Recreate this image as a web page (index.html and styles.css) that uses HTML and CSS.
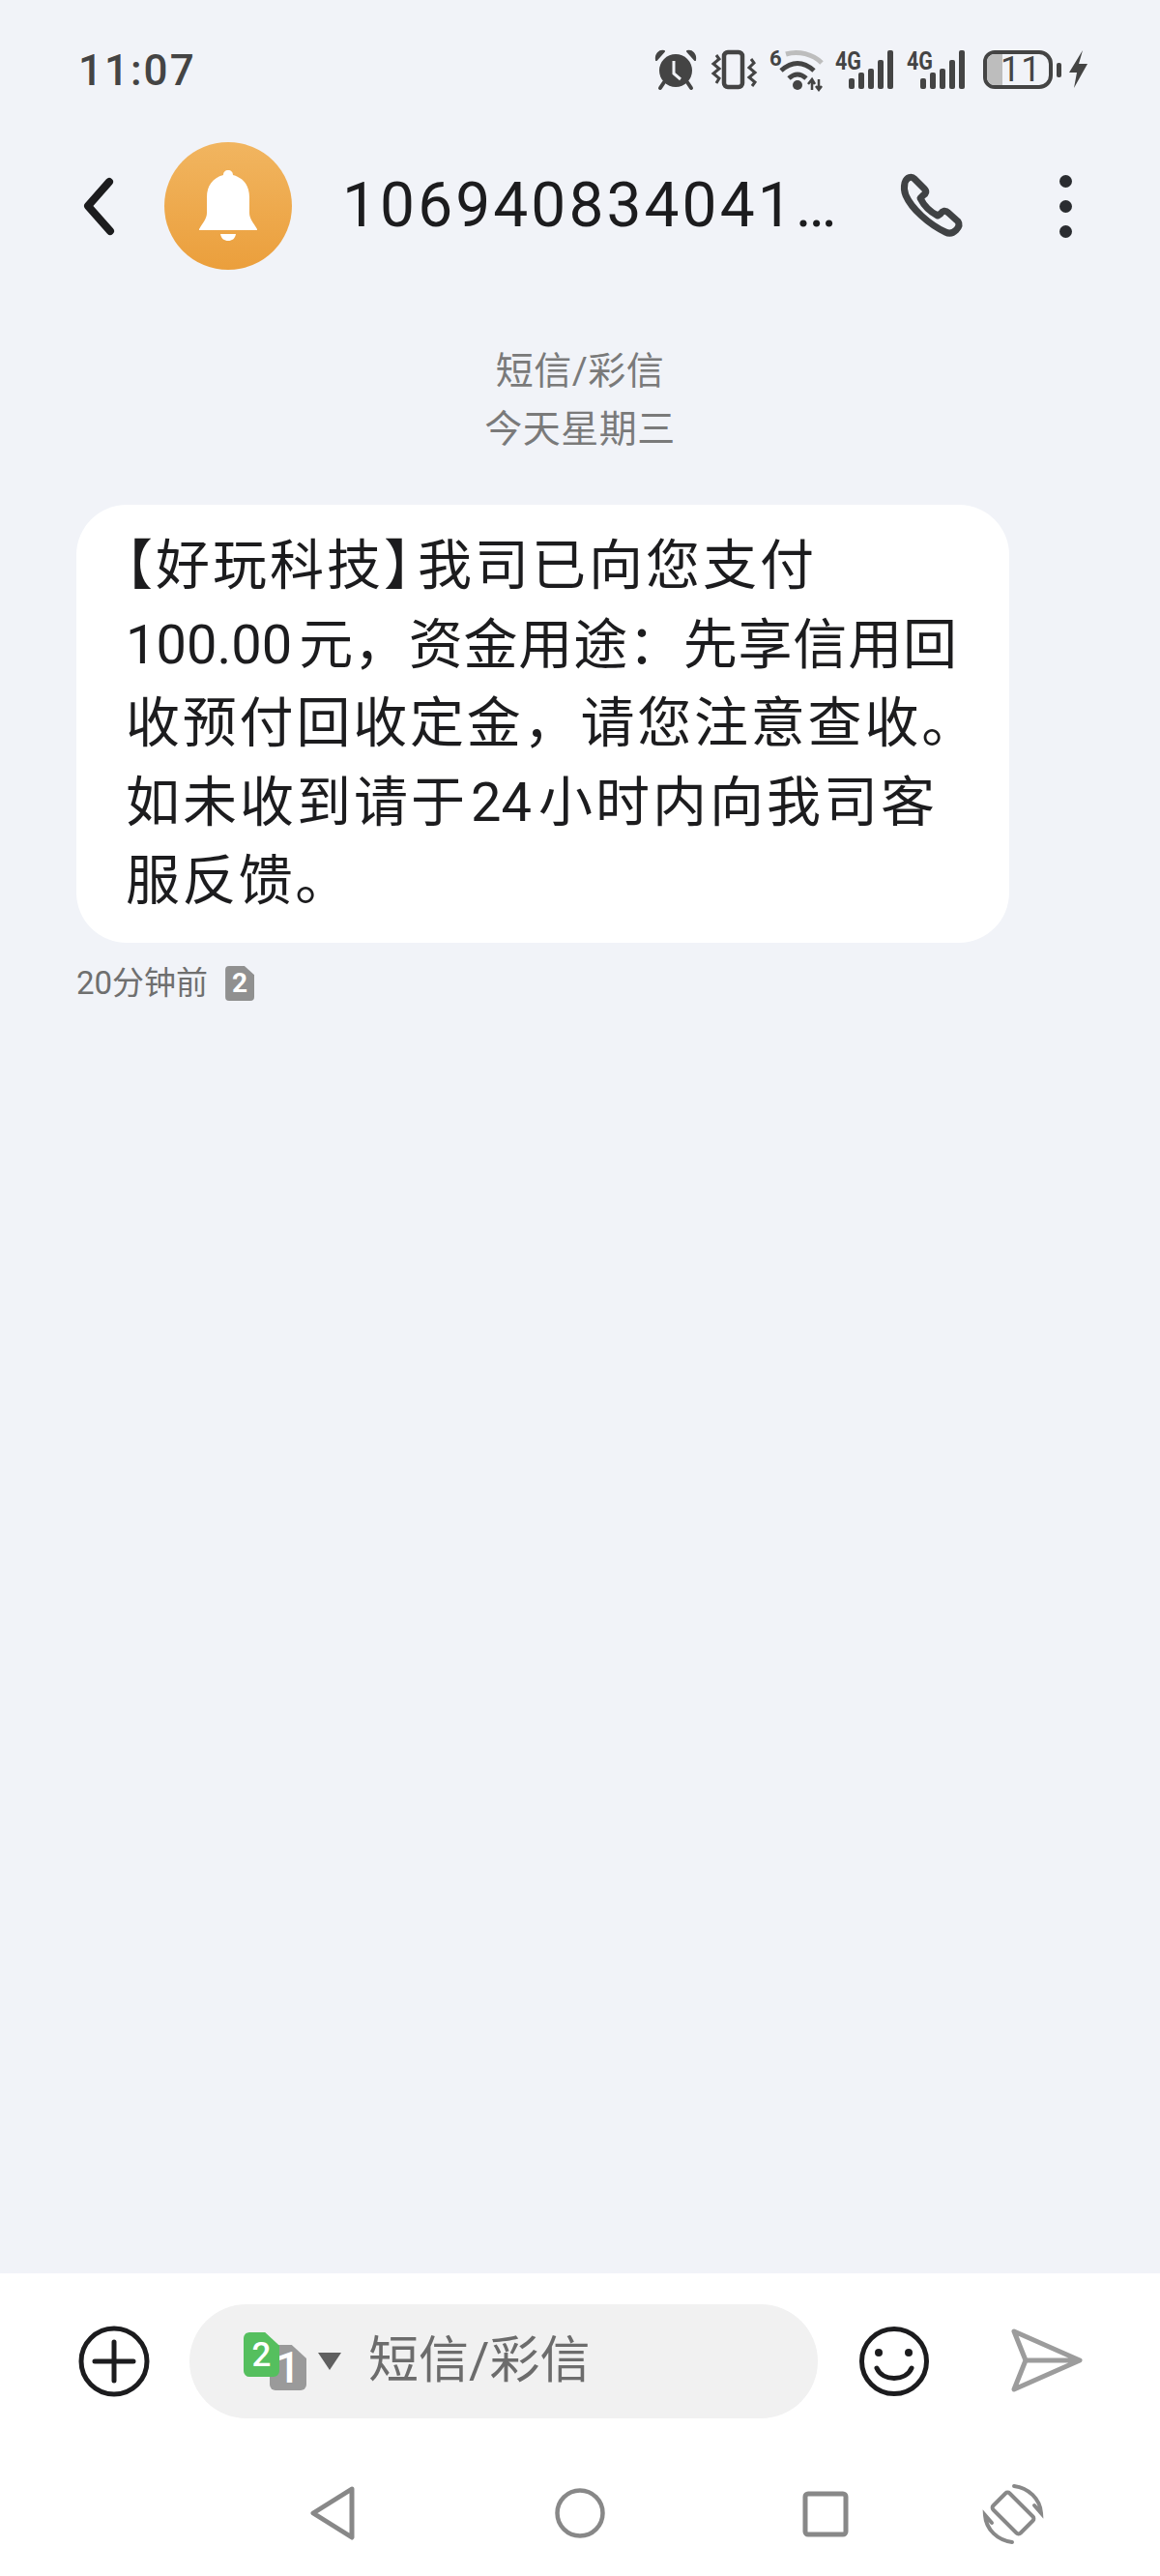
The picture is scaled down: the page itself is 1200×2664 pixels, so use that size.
FILE: index.html
```html
<!DOCTYPE html>
<html lang="zh-CN">
<head>
<meta charset="utf-8">
<title>短信</title>
<link rel="stylesheet" href="styles.css">
</head>
<body>
<div class="screen">
  <div class="status">
    <span class="clock">11:07</span>
    <div class="status-icons">
      <svg class="si-alarm" width="42" height="42" viewBox="0 0 42 42"><g fill="#444"><circle cx="21" cy="22" r="17"/><path d="M1 11 9 2C4 1 0 5 1 11ZM41 11 33 2C38 1 42 5 41 11Z" stroke="#444" stroke-width="2" stroke-linejoin="round"/></g><path d="M9 34 5 40M33 34l4 6" stroke="#444" stroke-width="4" stroke-linecap="round"/><path d="M19 12v13l7 6" fill="none" stroke="#f1f3f8" stroke-width="3"/></svg>
      <svg class="si-vib" width="48" height="42" viewBox="0 0 48 42"><rect x="14" y="3" width="19" height="36" rx="4" fill="none" stroke="#444" stroke-width="4.500"/><path d="M6 6 9 10 3 15l6 5-6 5 6 5-3 5M42 10l3 4-5 5 6 5-6 5 6 5-3 4" fill="none" stroke="#444" stroke-width="3"/></svg>
      <svg class="si-wifi" width="55" height="44" viewBox="0 0 55 44"><text x="0" y="18" class="ico-6">6</text><path d="M17 6C30 2 45 6 54 15" fill="none" stroke="#bdbdbd" stroke-width="5"/><path d="M12 23Q29 8 46 23" fill="none" stroke="#444" stroke-width="5"/><path d="M20 31Q29 23 38 31" fill="none" stroke="#444" stroke-width="5"/><circle cx="29" cy="38" r="5" fill="#444"/><path d="M44 43V33M40 37l4-5 3 5M51 32v11M48 39l3 4 3-4" fill="none" stroke="#444" stroke-width="2.500"/></svg>
      <svg width="61" height="42" viewBox="0 0 61 42"><text x="0" y="21" textLength="27" lengthAdjust="spacingAndGlyphs" class="ico-4g">4G</text><g fill="#444"><rect x="14" y="30" width="6" height="11" rx="2"/><rect x="24" y="24" width="6" height="17" rx="2"/><rect x="34" y="20" width="6" height="21" rx="2"/><rect x="44" y="11" width="6" height="30" rx="2"/><rect x="54" y="1" width="6" height="40" rx="2"/></g></svg>
      <svg width="61" height="42" viewBox="0 0 61 42"><text x="0" y="21" textLength="27" lengthAdjust="spacingAndGlyphs" class="ico-4g">4G</text><g fill="#444"><rect x="14" y="30" width="6" height="11" rx="2"/><rect x="24" y="24" width="6" height="17" rx="2"/><rect x="34" y="20" width="6" height="21" rx="2"/><rect x="44" y="11" width="6" height="30" rx="2"/><rect x="54" y="1" width="6" height="40" rx="2"/></g></svg>
      <div class="battery">
        <div class="bat-body"><div class="bat-fill"></div><span class="bat-num">11</span></div>
        <span class="bat-tip"></span>
      </div>
      <svg class="bolt" width="20" height="40" viewBox="0 0 20 40"><path d="M14 0 0 23h8L5 39 19 14h-9z" fill="#444"/></svg>
    </div>
  </div>

  <header class="topbar">
    <svg class="back" width="36" height="64" viewBox="0 0 36 64"><path d="M29 7 7 32l23 26" fill="none" stroke="#1c1c1e" stroke-width="8" stroke-linecap="round" stroke-linejoin="round"/></svg>
    <div class="avatar">
      <svg width="60" height="74" viewBox="0 0 60 74"><path d="M30 0c3 0 5 2 5 5 11 3 17 11 17 23v16c0 6 4 10 8 17v1H0v-1c4-7 8-11 8-17V28C8 16 14 8 25 5c0-3 2-5 5-5z" fill="#fff"/><path d="M22 66h16c-1 5-4 7-8 7s-7-2-8-7z" fill="#fff"/></svg>
    </div>
    <h1 class="title">106940834041…</h1>
    <svg class="phone" width="66" height="66" viewBox="0 0 66 66"><path d="M5 9C7 3 12 2 15 5L25 15C28 18 27 20 24 22L21 25C25 33 31 39 39 43L42 41C44 38 47 37 50 40L60 49C62 52 61 55 58 58C55 61 51 62 47 60C30 52 12 36 6 22C4 17 4 13 5 9Z" fill="none" stroke="#404244" stroke-width="7" stroke-linejoin="round"/></svg>
    <div class="more"><i></i><i></i><i></i></div>
  </header>

  <div class="meta">
    <div>短信/彩信</div>
    <div>今天星期三</div>
  </div>

  <main class="thread">
    <div class="bubble">
      <span class="line line-1"><span class="br br-open">【</span>好玩科技<span class="br br-close">】</span>我司已向您支付</span>
      <span class="line line-2"><span class="num num-a">100.00</span>元，资金用途：先享信用回</span>
      <span class="line line-3">收预付回收定金，请您注意查收。</span>
      <span class="line line-4">如未收到请于<span class="num num-b">24</span>小时内向我司客</span>
      <span class="line line-5">服反馈。</span>
    </div>
    <div class="stamp">
      <span>20分钟前</span>
      <span class="sim-badge">2</span>
    </div>
  </main>

  <footer class="composer">
    <svg class="plus" width="74" height="74" viewBox="0 0 74 74"><circle cx="37" cy="37" r="34" fill="none" stroke="#1c1c1e" stroke-width="5"/><path d="M17 37h40M37 17v40" stroke="#1c1c1e" stroke-width="5" stroke-linecap="round"/></svg>
    <div class="input">
      <div class="sim-stack">
        <span class="sim sim-green">2</span>
        <span class="sim sim-grey">1</span>
      </div>
      <span class="caret"></span>
      <span class="placeholder">短信/彩信</span>
    </div>
    <svg class="smile" width="74" height="74" viewBox="0 0 74 74"><circle cx="37" cy="37" r="33.500" fill="none" stroke="#1c1c1e" stroke-width="5"/><circle cx="21" cy="28" r="4" fill="#1c1c1e"/><circle cx="52" cy="28" r="4" fill="#1c1c1e"/><path d="M19 44c6 14 30 14 36 0" fill="none" stroke="#1c1c1e" stroke-width="5" stroke-linecap="round"/></svg>
    <svg class="send" width="74" height="66" viewBox="0 0 74 66"><path d="M3 3 71 33 3 63 15 33zM15 33h56" fill="none" stroke="#9c9c9c" stroke-width="5" stroke-linejoin="round"/></svg>
  </footer>

  <nav class="navbar">
    <svg width="50" height="56" viewBox="0 0 50 56"><path d="M44 3 4 28l40 25z" fill="none" stroke="#888" stroke-width="5" stroke-linejoin="round"/></svg>
    <svg width="52" height="52" viewBox="0 0 52 52"><circle cx="26" cy="26" r="23.500" fill="none" stroke="#888" stroke-width="4.500"/></svg>
    <svg width="48" height="48" viewBox="0 0 48 48"><rect x="3" y="3" width="42" height="42" rx="3" fill="none" stroke="#888" stroke-width="5"/></svg>
    <svg width="64" height="64" viewBox="0 0 64 64"><rect x="20" y="11" width="24" height="40" rx="3" transform="rotate(-45 32 31)" fill="none" stroke="#888" stroke-width="4"/><path d="M33 3C48 5 60 16 61 31L54 23M31 61C16 59 4 48 3 33L10 41" fill="none" stroke="#888" stroke-width="4" stroke-linecap="round"/></svg>
  </nav>
</div>
</body>
</html>
```
FILE: styles.css
```css
* { box-sizing: border-box; }
html, body { margin: 0; padding: 0; }
body {
  width: 1200px;
  height: 2664px;
  background: #f1f3f8;
  font-family: Roboto, "Noto Sans CJK SC", "Noto Sans", sans-serif;
  color: #1c1c1e;
  overflow: hidden;
}
.screen { display: flex; flex-direction: column; height: 2664px; }
svg { display: block; flex: none; overflow: visible; }

.status { height: 164px; padding: 50px 74px 0 81px; display: flex; justify-content: space-between; align-items: flex-start; }
.clock { font-size: 44px; line-height: 46px; font-weight: 500; letter-spacing: 2px; color: #444; }
.status-icons { display: flex; align-items: center; gap: 13px; }
.si-alarm { margin-right: 2px; }
.ico-6, .ico-4g { font-family: Roboto, sans-serif; font-weight: 700; fill: #444; }
.ico-6 { font-size: 22px; }
.ico-4g { font-size: 26px; }
.battery { display: flex; align-items: center; gap: 4px; margin-left: 5px; }
.bat-body { width: 72px; height: 40px; border: 4px solid #444; border-radius: 12px 14px 14px 12px; position: relative; overflow: hidden; display: flex; align-items: center; padding-left: 14px; }
.bat-fill { position: absolute; left: 0; top: 0; bottom: 0; width: 16px; background: #bdbdbd; }
.bat-num { position: relative; font-size: 36px; line-height: 30px; letter-spacing: 1px; color: #444; }
.bat-tip { width: 5px; height: 15px; background: #444; border-radius: 2px; }
.bolt { margin-left: -5px; }

.topbar { height: 98px; padding-left: 84px; display: flex; align-items: center; }
.back { margin-right: 50px; }
.avatar { width: 132px; height: 132px; flex: none; border-radius: 50%; background: linear-gradient(#f1b560, #eb9f3c); display: flex; align-items: center; justify-content: center; }
.title { margin: 0 0 0 52px; width: 530px; font-weight: 400; font-size: 64px; line-height: 80px; letter-spacing: 3.100px; white-space: nowrap; color: #1c1c1e; }
.phone { margin-left: 47px; }
.more { margin-left: 99px; display: flex; flex-direction: column; gap: 13px; }
.more i { display: block; width: 13px; height: 13px; border-radius: 50%; background: #2a2c30; }

.meta { margin-top: 92px; text-align: center; font-size: 39px; line-height: 60px; letter-spacing: .5px; color: #7a7a7a; }

.thread { flex: 1; padding: 48px 0 0 79px; }
.bubble { width: 965px; height: 453px; background: #fff; border-radius: 52px; padding: 23px 0 0 51px; font-size: 56px; line-height: 81.500px; color: #1c1c1e; white-space: nowrap; }
.line { display: block; }
.line-1 { letter-spacing: 3px; }
.line-2 { letter-spacing: .8px; }
.line-3 { letter-spacing: 2.800px; }
.line-4 { letter-spacing: 3px; }
.line-5 { letter-spacing: 2.400px; }
.br { font-feature-settings: "halt"; }
.br-close { margin-right: 4px; }
.num { letter-spacing: 0; }
.num-a { margin-right: 7px; }
.num-b { margin: 0 7px 0 3px; }
.stamp { margin-top: 19px; display: flex; align-items: center; gap: 18px; font-size: 33px; line-height: 46px; color: #6f6f6f; }
.sim-badge { width: 30px; height: 36px; background: #909090; color: #fff; border-radius: 4px; clip-path: polygon(0 0, 66% 0, 100% 26%, 100% 100%, 0 100%); display: flex; align-items: center; justify-content: center; font-weight: 700; font-size: 28px; line-height: 36px; }

.composer { height: 185px; background: #fff; padding: 32px 0 0 81px; display: flex; align-items: flex-start; }
.plus { margin-top: 22px; }
.input { width: 650px; height: 118px; margin-left: 41px; border-radius: 59px; background: #f1f1f1; display: flex; align-items: center; padding-left: 56px; }
.sim-stack { position: relative; width: 65px; height: 60px; flex: none; }
.sim { position: absolute; display: flex; align-items: center; justify-content: center; color: #fff; font-weight: 500; border-radius: 6px; clip-path: polygon(0 0, 60% 0, 100% 30%, 100% 100%, 0 100%); }
.sim-green { left: 0; top: 0; width: 37px; height: 46px; background: #55bf5e; font-size: 35px; z-index: 1; }
.sim-grey { left: 27px; top: 13px; width: 38px; height: 47px; background: #9a9a9a; font-size: 45px; }
.caret { width: 0; height: 0; margin-left: 12px; border-left: 12.500px solid transparent; border-right: 12.500px solid transparent; border-top: 18px solid #606060; }
.placeholder { margin-left: 28px; font-size: 52px; line-height: 70px; color: #6c6c6c; }
.smile { margin-left: 42px; margin-top: 22px; }
.send { margin-left: 84px; margin-top: 25px; }

.navbar { height: 128px; background: #fff; display: flex; align-items: flex-start; }
.navbar svg:nth-child(1) { margin: 35px 0 0 320px; }
.navbar svg:nth-child(2) { margin: 37px 0 0 204px; }
.navbar svg:nth-child(3) { margin: 40px 0 0 204px; }
.navbar svg:nth-child(4) { margin: 32px 0 0 138px; }
```
